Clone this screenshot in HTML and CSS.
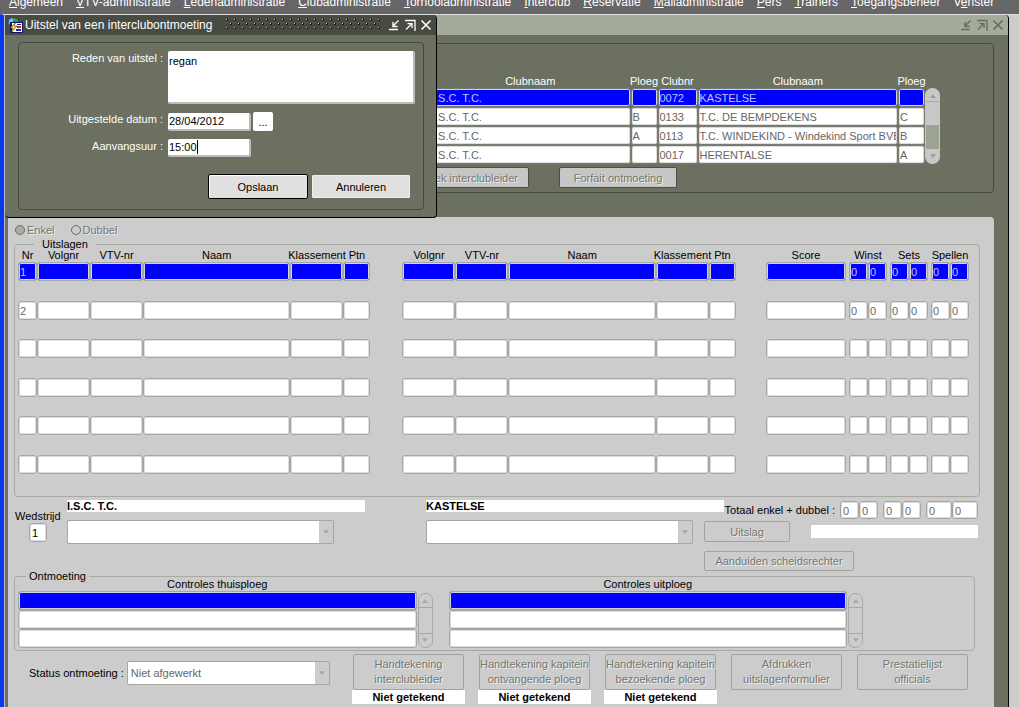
FILE: index.html
```html
<!DOCTYPE html>
<html lang="nl">
<head>
<meta charset="utf-8">
<title>Uitstel van een interclubontmoeting</title>
<link rel="stylesheet" href="styles.css">
</head>
<body>
<svg class="defs" aria-hidden="true">
  <symbol id="i-min" viewBox="0 0 12 12"><path d="M10.500 1.500L5 7M5 3v4.500h4.500M1 10.500h9" fill="none" stroke="currentColor" stroke-width="1.400"/></symbol>
  <symbol id="i-max" viewBox="0 0 12 12"><path d="M1 1.500h10V12M2 10.500L7.500 5M3.500 4.700H8V9" fill="none" stroke="currentColor" stroke-width="1.300"/></symbol>
  <symbol id="i-close" viewBox="0 0 12 12"><path d="M1.500 1.500l9 9M10.500 1.500l-9 9" fill="none" stroke="currentColor" stroke-width="1.600"/></symbol>
  <symbol id="i-up" viewBox="0 0 8 5"><path d="M4 0l4 5H0z" fill="currentColor"/></symbol>
  <symbol id="i-down" viewBox="0 0 8 5"><path d="M0 0h8L4 5z" fill="currentColor"/></symbol>
</svg>

<nav class="menu">
  <a href="#"><u>A</u>lgemeen</a>
  <a href="#"><u>V</u>TV-administratie</a>
  <a href="#"><u>L</u>edenadministratie</a>
  <a href="#"><u>C</u>lubadministratie</a>
  <a href="#"><u>T</u>ornooiadministratie</a>
  <a href="#"><u>I</u>nterclub</a>
  <a href="#"><u>R</u>eservatie</a>
  <a href="#"><u>M</u>ailadministratie</a>
  <a href="#"><u>P</u>ers</a>
  <a href="#"><u>T</u>rainers</a>
  <a href="#"><u>T</u>oegangsbeheer</a>
  <a href="#">V<u>e</u>nster</a>
</nav>

<div class="desktop">
  <main class="window">
    <header class="titlebar">
      <button class="winbtn" aria-label="Minimaliseren"><svg><use href="#i-min"/></svg></button>
      <button class="winbtn" aria-label="Maximaliseren"><svg><use href="#i-max"/></svg></button>
      <button class="winbtn" aria-label="Sluiten"><svg><use href="#i-close"/></svg></button>
    </header>

    <section class="meetings">
      <div class="meetings-list">
        <table class="grid dark">
          <colgroup><col><col class="w27"><col class="w40"><col><col class="w27"></colgroup>
          <thead><tr><th>Clubnaam</th><th>Ploeg</th><th>Clubnr</th><th>Clubnaam</th><th>Ploeg</th></tr></thead>
          <tbody id="meetings"></tbody>
        </table>
        <div class="scroll active"><svg><use href="#i-up"/></svg><span></span><svg><use href="#i-down"/></svg></div>
      </div>
      <div class="meeting-actions">
        <button class="btn off" disabled>Zoek interclubleider</button>
        <button class="btn off" disabled>Forfait ontmoeting</button>
      </div>
    </section>

    <section class="panel">
      <div class="radios">
        <label><input type="radio" name="type" checked disabled>Enkel</label>
        <label><input type="radio" name="type" disabled>Dubbel</label>
      </div>

      <fieldset class="results">
        <legend>Uitslagen</legend>
        <table class="grid scores">
          <colgroup>
            <col class="w19"><col class="w53"><col class="w53"><col><col class="w53"><col class="w27">
            <col class="w32"><col class="w53"><col class="w53"><col><col class="w53"><col class="w27">
            <col class="w30"><col class="w80"><col class="w3"><col class="w19"><col class="w19">
            <col class="w3"><col class="w19"><col class="w19"><col class="w3"><col class="w19"><col class="w19">
          </colgroup>
          <thead><tr>
            <th>Nr</th><th>Volgnr</th><th>VTV-nr</th><th>Naam</th><th>Klassement</th><th>Ptn</th>
            <td></td><th>Volgnr</th><th>VTV-nr</th><th>Naam</th><th>Klassement</th><th>Ptn</th>
            <td></td><th>Score</th><td></td><th colspan="2">Winst</th>
            <td></td><th colspan="2">Sets</th><td></td><th colspan="2">Spellen</th>
          </tr></thead>
          <tbody id="scores"></tbody>
        </table>
      </fieldset>

      <section class="match">
        <div class="match-no">
          <label for="wedstrijd">Wedstrijd</label>
          <input class="field" id="wedstrijd" value="1">
        </div>
        <div class="team">
          <output class="strip">I.S.C. T.C.</output>
          <span class="select"><select aria-label="Speler thuisploeg" disabled><option></option></select><svg><use href="#i-down"/></svg></span>
        </div>
        <div class="team">
          <output class="strip">KASTELSE</output>
          <span class="select"><select aria-label="Speler uitploeg" disabled><option></option></select><svg><use href="#i-down"/></svg></span>
        </div>
        <div class="totals">
          <div class="totals-row">
            <span>Totaal enkel + dubbel :</span>
            <span class="pair"><input class="field off" aria-label="Winst thuis" value="0" disabled><input class="field off" aria-label="Winst uit" value="0" disabled></span>
            <span class="pair"><input class="field off" aria-label="Sets thuis" value="0" disabled><input class="field off" aria-label="Sets uit" value="0" disabled></span>
            <span class="pair wide"><input class="field off" aria-label="Spellen thuis" value="0" disabled><input class="field off" aria-label="Spellen uit" value="0" disabled></span>
          </div>
          <div class="outcome">
            <button class="btn off" disabled>Uitslag</button>
            <output class="strip"></output>
          </div>
          <button class="btn off referee" disabled>Aanduiden scheidsrechter</button>
        </div>
      </section>

      <fieldset class="checks">
        <legend>Ontmoeting</legend>
        <div class="check-list">
          <table class="grid">
            <thead><tr><th>Controles thuisploeg</th></tr></thead>
            <tbody id="home-checks"></tbody>
          </table>
          <div class="scroll"><svg><use href="#i-up"/></svg><span></span><svg><use href="#i-down"/></svg></div>
        </div>
        <div class="check-list">
          <table class="grid">
            <thead><tr><th>Controles uitploeg</th></tr></thead>
            <tbody id="away-checks"></tbody>
          </table>
          <div class="scroll"><svg><use href="#i-up"/></svg><span></span><svg><use href="#i-down"/></svg></div>
        </div>
      </fieldset>

      <footer class="footer">
        <div class="status">
          <label for="status">Status ontmoeting :</label>
          <span class="select"><select id="status" disabled><option>Niet afgewerkt</option></select><svg><use href="#i-down"/></svg></span>
        </div>
        <div class="sign"><button class="btn off" disabled>Handtekening<br>interclubleider</button><output class="strip">Niet getekend</output></div>
        <div class="sign"><button class="btn off" disabled>Handtekening kapitein<br>ontvangende ploeg</button><output class="strip">Niet getekend</output></div>
        <div class="sign"><button class="btn off" disabled>Handtekening kapitein<br>bezoekende ploeg</button><output class="strip">Niet getekend</output></div>
        <div class="sign"><button class="btn off" disabled>Afdrukken<br>uitslagenformulier</button></div>
        <div class="sign"><button class="btn off" disabled>Prestatielijst<br>officials</button></div>
      </footer>
    </section>
  </main>

  <form class="dialog" role="dialog" aria-labelledby="dialog-title">
    <header class="titlebar">
      <svg class="logo" viewBox="0 0 16 16" aria-hidden="true">
        <circle cx="6" cy="6" r="5.500" fill="#2b5c9c"/>
        <path d="M2 3l3-2 2 2-2 3-3 1z" fill="#8fc0d8"/><path d="M7 1l4 2-1 2-3-1z" fill="#3d9a55"/>
        <path d="M3 5h13v11H3z" fill="#141466"/><path d="M5 6h10v9H5z" fill="#fff"/>
        <path d="M10 7h4v1h-4z" fill="#2020a0"/><path d="M10 9h4v2h-4z" fill="#d02828"/>
        <path d="M9 12h5v2H9z" fill="#2020a0"/>
        <path d="M9 5L3 11h3l-2 5 6-7H7z" fill="#ffe800" stroke="#141466" stroke-width=".5"/>
      </svg>
      <h1 id="dialog-title">Uitstel van een interclubontmoeting</h1>
      <span class="grip"></span>
      <button type="button" class="winbtn" aria-label="Minimaliseren"><svg><use href="#i-min"/></svg></button>
      <button type="button" class="winbtn" aria-label="Maximaliseren"><svg><use href="#i-max"/></svg></button>
      <button type="button" class="winbtn" aria-label="Sluiten"><svg><use href="#i-close"/></svg></button>
    </header>
    <div class="dialog-body">
      <label for="reden">Reden van uitstel :</label>
      <textarea id="reden">regan</textarea>
      <label for="datum">Uitgestelde datum :</label>
      <div class="date"><input id="datum" value="28/04/2012"><button type="button" class="pick" aria-label="Kies datum">...</button></div>
      <label for="uur">Aanvangsuur :</label>
      <div class="time"><input id="uur" value="15:00"><i class="caret"></i></div>
      <div class="dialog-actions">
        <button type="button" class="main">Opslaan</button>
        <button type="button">Annuleren</button>
      </div>
    </div>
  </form>
</div>
<script src="app.js"></script>
</body>
</html>
```
FILE: styles.css
```css
* { box-sizing: border-box; }

body {
  margin: 0;
  min-height: 100vh;
  display: flex;
  flex-direction: column;
  overflow: hidden;
  background: #ccc;
  color: #000;
  font: 11px/14px "Liberation Sans", Arial, sans-serif;
}

input, select, textarea, button { font: inherit; color: inherit; margin: 0; }
fieldset { margin: 0; min-width: 0; }
.defs { display: none; }

/* Menu bar */
.menu {
  display: flex;
  align-items: flex-end;
  gap: 13px;
  height: 14px;
  padding: 0 9px 5px;
  overflow: hidden;
  background: #666;
  font-size: 12px;
  white-space: nowrap;
}
.menu a { color: #fff; text-decoration: none; }

/* Windows */
.desktop {
  position: relative;
  flex: 1;
  display: flex;
  padding-right: 10px;
  border-left: 4px solid #0838e8;
  border-top: 1px solid #ddd;
}
.window {
  flex: 1;
  min-width: 0;
  display: flex;
  flex-direction: column;
  padding-left: 3px;
  background: #6b7061;
  border-left: 1px solid #b8bcc8;
  border-right: 1px solid #000;
  border-bottom: 1px solid #333;
  border-top-right-radius: 4px;
}
.titlebar {
  display: flex;
  align-items: center;
  justify-content: flex-end;
  gap: 4px;
  height: 20px;
  padding-right: 4px;
}
.window > .titlebar { margin-left: -3px; background: #a5ab9b; color: #666b5d; border-top-right-radius: 4px; }
.winbtn { display: flex; padding: 0; border: 0; background: none; }
.winbtn svg { width: 12px; height: 12px; }

/* Meetings */
.meetings {
  margin: 8px 14px 24px 6px;
  padding: 30px 53px 4px 415px;
  color: #fff;
  border: 1px solid #454a3e;
  border-radius: 4px;
}
.meetings-list { display: flex; align-items: flex-end; }
.meeting-actions { display: flex; gap: 30px; margin: 3px 0 0 -19px; }
.meeting-actions .btn { width: 118px; height: 21px; background: #c6c6c6; border-color: #4a4e44; }

/* Field grids */
.grid { flex: 1; width: 100%; table-layout: fixed; border-collapse: collapse; }
.grid th { padding: 0; font-weight: normal; white-space: nowrap; }
.grid thead tr { height: 14px; }
.grid td { padding: 0; vertical-align: top; }
.grid .field { width: 100%; }
.grid th span { display: flex; justify-content: center; margin: 0 -10px; }
.w3 { width: 3px; } .w19 { width: 19px; } .w27 { width: 27px; } .w30 { width: 30px; }
.w32 { width: 32px; } .w40 { width: 40px; } .w53 { width: 53px; } .w80 { width: 80px; }
.field {
  display: block;
  height: 19px;
  padding: 1px 1px 0;
  background: #fff;
  border: 1px solid #a6a6a2;
  border-radius: 3px;
  box-shadow: inset 0 0 0 1px #ddd;
}
.field.off { color: #666; }
.current .field { background: #00f; color: #c0c0ff; box-shadow: inset 0 0 0 1px #d4d4e0; }
.dark .field { border-color: #777b70; }
.scores .field { padding-left: 1px; }
.scores tbody tr:nth-child(odd) { height: 39px; }
.scores tbody tr:nth-child(even) { height: 38px; }
.scores tbody tr:last-child { height: 19px; }

.scroll {
  display: flex;
  flex-direction: column;
  align-items: center;
  justify-content: space-between;
  width: 15px;
  height: 55px;
  padding: 5px 0;
  border: 1px solid #a9a9a4;
  border-radius: 7px;
  color: #a9a9a4;
}
.scroll svg { width: 6px; height: 4px; }
.scroll span { align-self: stretch; height: 27px; border: solid #a9a9a4; border-width: 1px 0; }
.scroll.active { height: 76px; border-color: #c6c6c6; color: #9a9a96; background: linear-gradient(#c8c8c8 36px, #9da392 36px 60px, #c8c8c8 60px); }
.scroll.active span { height: 50px; border-bottom: 0; }

/* Controls */
.btn {
  padding: 0 2px;
  background: #ccc;
  border: 1px solid #a2a2a0;
  border-radius: 2px;
}
.btn.off { color: #74776e; text-shadow: 1px 1px #eee; }
.select { position: relative; display: flex; }
.select select {
  appearance: none;
  width: 100%;
  height: 24px;
  padding: 0 17px 0 3px;
  color: #666;
  opacity: 1;
  border: 1px solid #a6a6a2;
  border-radius: 2px;
  background: linear-gradient(to left, #ccc 14px, #fff 14px);
}
.select svg { position: absolute; right: 5px; top: 10px; width: 6px; height: 4px; color: #a6a6a2; }
.strip { display: block; height: 12px; line-height: 13px; background: #fff; font-weight: bold; }

/* Results panel */
.panel {
  flex: 1;
  margin-right: 14px;
  padding: 6px 14px 3px 6px;
  background: #ccc;
  border-top-right-radius: 4px;
}
.radios { display: flex; gap: 16px; padding-left: 1px; color: #74776e; text-shadow: 1px 1px #eee; }
.radios label { display: flex; align-items: center; gap: 2px; }
.radios input {
  appearance: none;
  width: 10px;
  height: 10px;
  border: 1px solid #6b7061;
  border-radius: 50%;
}
.radios input:checked { background: #a9ada2; }

.results, .checks { border: 1px solid #a9a9a4; border-radius: 4px; }
.results { margin-top: 3px; padding: 0 10px 22px 3px; }
.results legend, .checks legend { line-height: 8px; }
.results legend { margin-left: 16px; padding: 0 8px; }

.match {
  display: grid;
  grid-template-columns: 53px minmax(0, 359fr) minmax(0, 278fr) 276px;
  padding-top: 3px;
}
.match-no { display: flex; flex-direction: column; align-items: flex-start; padding: 9px 0 0 1px; }
.match-no .field { width: 18px; margin-left: 14px; padding-left: 2px; }
.team .select { width: 267px; margin-top: 8px; }
.team .strip { width: 298px; }
.totals { display: flex; flex-direction: column; align-items: flex-start; padding: 1px 2px 0 0; }
.totals-row { align-self: flex-end; display: flex; align-items: center; gap: 5px; }
.pair { display: flex; }
.pair .field { width: 19px; height: 18px; padding-left: 2px; }
.pair.wide .field { width: 26px; }
.outcome { align-self: stretch; display: flex; align-items: center; gap: 21px; margin-top: 2px; }
.outcome .btn { width: 86px; height: 21px; }
.outcome .strip { flex: 1; height: 13px; }
.referee { width: 150px; height: 20px; margin-top: 9px; }

.checks { display: flex; gap: 16px; margin: 1px 5px 0 0; padding: 0 111px 2px 3px; }
.checks legend { margin-left: 8px; padding: 0 3px; }
.check-list { flex: 1; display: flex; align-items: flex-end; gap: 1px; margin-top: -3px; }

.footer { display: flex; gap: 13px; padding: 3px 11px 0 15px; }
.status { flex: 1; display: flex; align-items: center; gap: 3px; align-self: flex-start; padding-top: 7px; margin-right: 9px; white-space: nowrap; }
.status .select { flex: 1; }
.sign { display: flex; flex-direction: column; align-items: center; width: 113px; }
.sign .btn { width: 111px; height: 36px; padding: 0; line-height: 15px; white-space: nowrap; }
.sign .strip { align-self: stretch; height: 14px; line-height: 15px; text-align: center; }

/* Postponement dialog, floating over the window */
.dialog {
  position: absolute;
  left: 1px;
  top: 0;
  width: 432px;
  background: #6b7061;
  color: #fff;
  border: solid #000;
  border-width: 0 1px 1px 0;
  border-radius: 0 4px 4px 4px;
}
.dialog .titlebar { gap: 4px; padding-left: 2px; background: #474b41; border-top-right-radius: 4px; }
.logo { width: 16px; height: 16px; }
.dialog h1 { margin: 0 0 0 -2px; font-size: 12px; font-weight: normal; white-space: nowrap; }
.grip {
  flex: 1;
  height: 12px;
  margin: 0 2px 0 10px;
  background:
    conic-gradient(from 270deg at 1px 1px, #c4c6c0 90deg, transparent 0) 0 0 / 8px 8px,
    conic-gradient(from 270deg at 1px 1px, #c4c6c0 90deg, transparent 0) 4px 4px / 8px 8px,
    conic-gradient(from 270deg at 2px 2px, #1c1e19 90deg, transparent 0) 0 0 / 8px 8px,
    conic-gradient(from 270deg at 2px 2px, #1c1e19 90deg, transparent 0) 4px 4px / 8px 8px;
}
.dialog-body {
  display: grid;
  grid-template-columns: 144px 1fr;
  column-gap: 5px;
  row-gap: 8px;
  margin: 7px 12px 7px 13px;
  padding: 8px 8px 10px 0;
  border: 1px solid #454a3e;
  border-radius: 4px;
}
.dialog-body label { text-align: right; }
.dialog-body input, .dialog-body textarea {
  display: block;
  color: #000;
  background: #fff;
  border: solid #bbb;
  border-width: 0 2px 2px 0;
  border-radius: 2px;
  outline: 0;
}
.dialog-body textarea { width: 100%; height: 53px; padding: 3px 1px; resize: none; }
.dialog-body input { width: 83px; height: 18px; padding: 1px; }
.date { display: flex; gap: 2px; align-items: center; }
.pick { width: 20px; height: 19px; padding: 0; background: #fff; color: #000; border: 0; border-radius: 2px; }
.time { position: relative; }
.caret { position: absolute; left: 29px; top: 1px; width: 1px; height: 14px; background: #000; }
.dialog-actions { grid-column: 2; display: flex; align-items: center; justify-content: flex-end; gap: 4px; padding: 9px 5px 0 0; }
.dialog-actions button { width: 98px; height: 23px; color: #000; background: #e0e0e0; border: 1px solid #eee; border-radius: 1px; }
.dialog-actions .main { width: 100px; height: 25px; border: 1px solid #000; box-shadow: inset 1px 1px #fff; border-radius: 2px; }
```
FILE: app.js
```js
const cell = (name, value = "") =>
  `<td><input class="field off" aria-label="${name}" value="${value}" readonly></td>`;

const fill = (id, rows) => {
  document.getElementById(id).innerHTML = rows
    .map((cells, i) => `<tr${i ? "" : ' class="current"'}>${cells}</tr>`)
    .join("");
};

const meetings = [
  ["I.S.C. T.C.", "", "0072", "KASTELSE", ""],
  ["I.S.C. T.C.", "B", "0133", "T.C. DE BEMPDEKENS", "C"],
  ["I.S.C. T.C.", "A", "0113", "T.C. WINDEKIND - Windekind Sport BVBA", "B"],
  ["I.S.C. T.C.", "", "0017", "HERENTALSE", "A"],
];
const meetingCols = ["Clubnaam thuis", "Ploeg thuis", "Clubnr", "Clubnaam uit", "Ploeg uit"];
fill("meetings", meetings.map(row => row.map((v, i) => cell(meetingCols[i], v)).join("")));

const gap = "<td></td>";
const player = ["Volgnr", "VTV-nr", "Naam", "Klassement", "Ptn"].map(n => cell(n)).join("");
fill("scores", [1, 2, "", "", "", ""].map(nr => {
  const zero = nr ? "0" : "";
  const pairs = ["Winst", "Sets", "Spellen"].map(n => gap + cell(n, zero) + cell(n, zero)).join("");
  return cell("Nr", nr) + player + gap + player + gap + cell("Score") + pairs;
}));

for (const id of ["home-checks", "away-checks"]) {
  fill(id, [1, 2, 3].map(() => cell("Controle")));
}

document.querySelectorAll(".grid th").forEach(th => {
  th.innerHTML = `<span>${th.textContent}</span>`;
});
```
